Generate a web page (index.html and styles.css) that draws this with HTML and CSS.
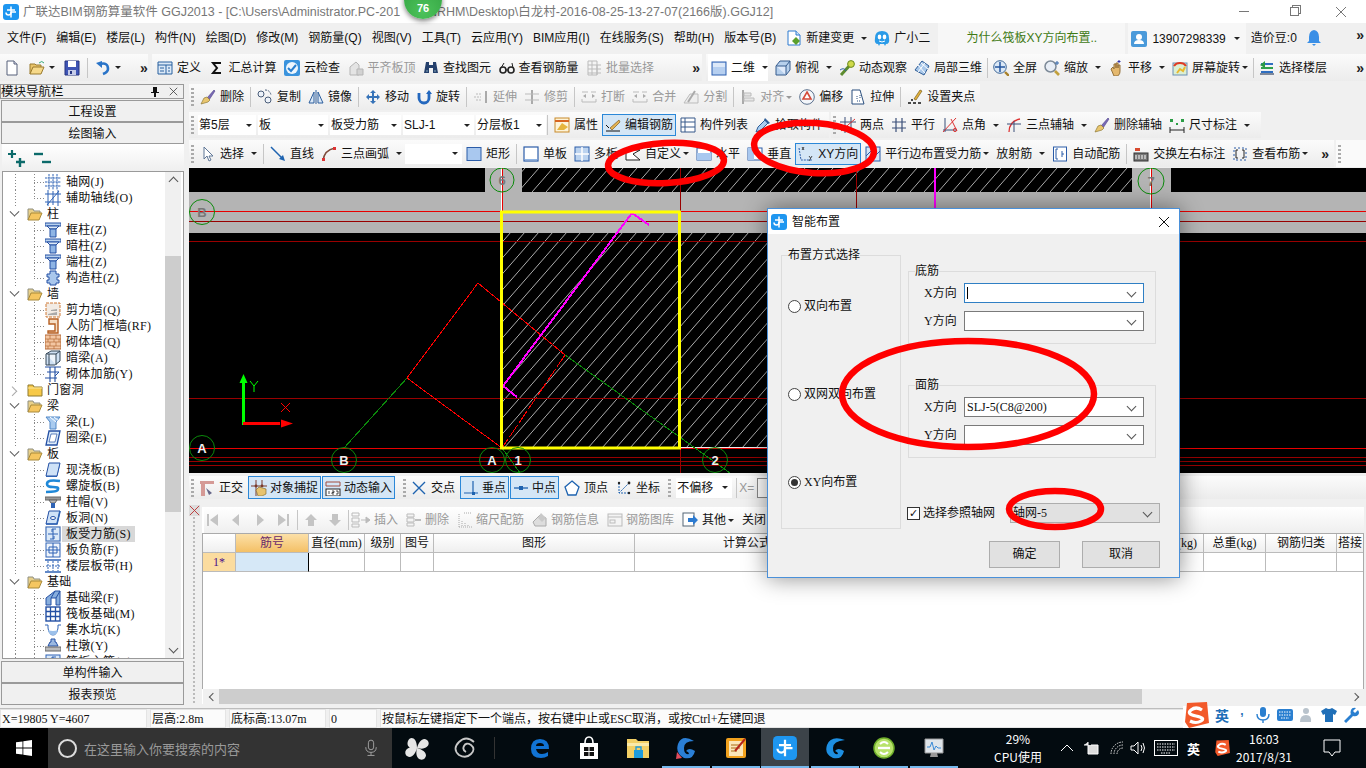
FILE: index.html
```html
<!DOCTYPE html>
<html lang="zh-CN">
<head>
<meta charset="utf-8">
<title>广联达BIM钢筋算量软件 GGJ2013</title>
<link rel="stylesheet" href="styles.css">
</head>
<body>
<svg class="sprite" xmlns="http://www.w3.org/2000/svg">
<defs>
<symbol id="new" viewBox="0 0 16 16"><path d="M3 1h7l3 3v11H3z" fill="#fff" stroke="#56607a"/><path d="M10 1v3h3" fill="#dde" stroke="#56607a"/></symbol>
<symbol id="chg" viewBox="0 0 16 16"><path d="M2 1h8l4 4v10H2z" fill="#fff" stroke="#2c7ad0"/><path d="M10 1v4h4" fill="#cfe3f7" stroke="#2c7ad0"/><path d="M10 7l4 4-4 4-4-4z" fill="#5aa02c"/></symbol>
<symbol id="gxe" viewBox="0 0 16 16"><path d="M1 8Q1 1 8 1t7 7q1 6-3 6l-1 2-1-2H6l-1 2-1-2Q0 14 1 8z" fill="#2a9be8"/><ellipse cx="5.500" cy="7" rx="1.800" ry="2.400" fill="#fff"/><ellipse cx="10.500" cy="7" rx="1.800" ry="2.400" fill="#fff"/><path d="M5 11q3 2 6 0" fill="none" stroke="#fff"/></symbol>
<symbol id="usr" viewBox="0 0 16 16"><rect width="16" height="16" rx="2" fill="#4a9ada"/><circle cx="8" cy="6" r="3" fill="#fff"/><path d="M3 13q0-4 5-4t5 4z" fill="#fff"/></symbol>
<symbol id="bell" viewBox="0 0 16 16"><path d="M8 0q5 1 5 7v4l2 2H1l2-2V7q0-6 5-7z" fill="#3a8fe6"/><path d="M6 14h4l-2 2z" fill="#3a8fe6"/></symbol>
<symbol id="x" viewBox="0 0 12 12"><path d="M1 1l10 10M11 1L1 11" stroke="currentColor" fill="none"/></symbol>
<symbol id="open" viewBox="0 0 16 16"><path d="M1 14V4h5l1 1h5v2" fill="#e9c46a" stroke="#9a7a2e"/><path d="M1 14l3-7h11l-3 7z" fill="#f6d98a" stroke="#9a7a2e"/><path d="M10 3q3-3 5 0" fill="none" stroke="#3a7"/></symbol>
<symbol id="save" viewBox="0 0 16 16"><path d="M1 1h14v14H1z" fill="#3f55b5" stroke="#263580"/><path d="M4 1h8v6H4z" fill="#fff"/><path d="M4 10h8v5H4z" fill="#c6cce8"/><path d="M6 11h2v3H6z" fill="#263580"/></symbol>
<symbol id="undo" viewBox="0 0 16 16"><path d="M5 4q8-2 8 5 0 3-5 5" fill="none" stroke="#2a74c8" stroke-width="2.600"/><path d="M1 3l6-2v7z" fill="#2a74c8"/></symbol>
<symbol id="def" viewBox="0 0 16 16"><path d="M1 2h14v12H1z" fill="#dce9f7" stroke="#28609f"/><path d="M1 5h14M9 5v9M3 8h4M3 11h4M11 8h2M11 11h2" stroke="#28609f"/></symbol>
<symbol id="sigma" viewBox="0 0 16 16"><path d="M12 3H4l4 5-4 5h8" fill="none" stroke="#111" stroke-width="2"/></symbol>
<symbol id="cloud" viewBox="0 0 16 16"><rect x="0" y="0" width="16" height="16" rx="2" fill="#3a93dd"/><circle cx="8" cy="8" r="6" fill="#eef6fd"/><path d="M4 8l3 3 5-6" fill="none" stroke="#2a7fce" stroke-width="2"/></symbol>
<symbol id="flat" viewBox="0 0 16 16"><path d="M2 15V7l6-5 3 3v10z" fill="#e4e4e4" stroke="#b5b5b5"/><path d="M9 15V9h6v6z" fill="#d2d2d2" stroke="#b5b5b5"/></symbol>
<symbol id="binoc" viewBox="0 0 16 16"><path d="M3 2h3v3h4V2h3l2 11h-5V8H6v5H1z" fill="#25406c"/><path d="M3 11h2M11 11h2" stroke="#8ab"/></symbol>
<symbol id="glass" viewBox="0 0 16 16"><circle cx="4" cy="10" r="3" fill="none" stroke="#222" stroke-width="1.600"/><circle cx="12" cy="10" r="3" fill="none" stroke="#222" stroke-width="1.600"/><path d="M7 10h2M2 8l3-5M14 8l-1-5" stroke="#222"/></symbol>
<symbol id="batch" viewBox="0 0 16 16"><path d="M2 1h9v14H2z" fill="#f4f4f4" stroke="#bbb"/><path d="M2 5h13M2 9h13M2 13h13M6 1v14M11 5v10" stroke="#bbb"/></symbol>
<symbol id="sq" viewBox="0 0 16 16"><rect x="1" y="2" width="14" height="13" fill="#b6cff0" stroke="#2c5fb0"/><path d="M2 3h12v4H2z" fill="#dce8f8"/></symbol>
<symbol id="cube" viewBox="0 0 16 16"><path d="M1 6l4-5h10v9l-4 5H1z" fill="#b7d0ec" stroke="#355a8c"/><path d="M1 6h10v9M11 6l4-5" fill="#dfeafa" stroke="#355a8c"/></symbol>
<symbol id="orbit" viewBox="0 0 16 16"><path d="M2 15L12 4" stroke="#5d8c2f" stroke-width="3"/><circle cx="12" cy="4" r="3.400" fill="#cfd94a" stroke="#6a8a20"/><path d="M1 10q4-3 6 1" fill="none" stroke="#2c5fb0"/></symbol>
<symbol id="part" viewBox="0 0 16 16"><path d="M8 1l7 5-5 9-9-5z" fill="#a9c8ea" stroke="#2e5c96"/><path d="M4 5l7 8M7 3l7 6M11 3l-7 9" stroke="#fff"/></symbol>
<symbol id="zfull" viewBox="0 0 16 16"><circle cx="7" cy="7" r="6.300" fill="#dbe8f6" stroke="#3d6696"/><path d="M7 2v10M2 7h10" stroke="#25559e" stroke-width="1.500"/><path d="M12 12l4 4" stroke="#a9812b" stroke-width="2.400"/></symbol>
<symbol id="zoom" viewBox="0 0 16 16"><circle cx="6.500" cy="6.500" r="5.500" fill="#e8eef6" stroke="#7d8a98" stroke-width="1.500"/><path d="M11 11l4 4" stroke="#c2a03c" stroke-width="2.600"/><path d="M13 1v4M11 3h4" stroke="#36a"/></symbol>
<symbol id="hand" viewBox="0 0 16 16"><path d="M3 9l2-2 1 2V4h2v4-5h2v5-3h2v6q0 5-4 5H6z" fill="#e4b86e" stroke="#94713a"/><path d="M11 0v3M9.500 1.500h3" stroke="#33a"/></symbol>
<symbol id="srot" viewBox="0 0 16 16"><rect x="1" y="3" width="14" height="12" fill="#dcefd3" stroke="#6b90b5"/><path d="M5 13l3-4 3 2 2-4" stroke="#e9b92e" stroke-width="2" fill="none"/><path d="M2 6a7 6 0 0 1 12 0" fill="none" stroke="#e03a22" stroke-width="2"/></symbol>
<symbol id="floors" viewBox="0 0 16 16"><path d="M2 3h12v2H2z" fill="#2f6ec0"/><path d="M2 7h12v2H2z" fill="#2fa04a"/><path d="M2 11h12v2H2z" fill="#2f6ec0"/><path d="M6 1L1 5l5 3z" fill="#2a9a44"/><path d="M1 14h14" stroke="#124"/></symbol>
<symbol id="brush" viewBox="0 0 16 16"><path d="M7 9L14 1l1 1-6 9z" fill="#7a6bb5" stroke="#4d3f8a" stroke-width=".6"/><path d="M7 8l3 3-2 2-7 2 3-6z" fill="#e9c66e" stroke="#8f7a36" stroke-width=".7"/></symbol>
<symbol id="copy" viewBox="0 0 16 16"><circle cx="4" cy="5" r="3" fill="#eef3fa" stroke="#4a5d78"/><circle cx="11" cy="11" r="3" fill="#eef3fa" stroke="#4a5d78"/><path d="M8 1q5 0 6 5" fill="none" stroke="#4a5d78" stroke-dasharray="2 1"/></symbol>
<symbol id="mirror" viewBox="0 0 16 16"><path d="M1 14L6 3v11zM15 14L10 3v11z" fill="#dce9f7" stroke="#2b5d9c"/><path d="M8 1v14" stroke="#2b5d9c"/></symbol>
<symbol id="move" viewBox="0 0 16 16"><path d="M8 1l3 3H9v3h3V5l3 3-3 3V9H9v3h2l-3 3-3-3h2V9H4v2L1 8l3-3v2h3V4H5z" fill="#3673b8"/></symbol>
<symbol id="rot" viewBox="0 0 16 16"><path d="M3 4v5a5 5 0 0 0 10 0V3" fill="none" stroke="#2468be" stroke-width="2.800"/><path d="M10 5l3-4 3 4z" fill="#2468be"/></symbol>
<symbol id="gext" viewBox="0 0 16 16"><path d="M1 8h7M3 5h5M3 11h5" stroke="#bbb" stroke-dasharray="2 1"/><path d="M13 2v12" stroke="#aaa" stroke-width="2"/></symbol>
<symbol id="gtrim" viewBox="0 0 16 16"><path d="M8 1v14" stroke="#aaa" stroke-width="2"/><path d="M1 5h14M1 11h14" stroke="#bbb"/></symbol>
<symbol id="gbrk" viewBox="0 0 16 16"><path d="M1 3h6M10 3h5M1 13h14v-3M1 13v-3" stroke="#bbb" fill="none"/><path d="M2 7l3-2v4zM14 7l-3-2v4z" fill="#aaa"/></symbol>
<symbol id="gsplit" viewBox="0 0 16 16"><path d="M1 14h14V5H7z" fill="#eee" stroke="#bbb"/><path d="M12 2L5 13" stroke="#aaa" stroke-width="2"/></symbol>
<symbol id="galn" viewBox="0 0 16 16"><path d="M3 1v14" stroke="#aaa" stroke-width="2"/><path d="M4 4h7v3H4zM4 9h10v3H4z" fill="#e6e6e6" stroke="#bbb"/></symbol>
<symbol id="off" viewBox="0 0 16 16"><circle cx="8" cy="8" r="7.300" fill="#f3f6fa" stroke="#5a6f8c"/><path d="M8 3l4 7H4z" fill="#fff" stroke="#d44a3a" stroke-width="1.600"/></symbol>
<symbol id="stretch" viewBox="0 0 16 16"><path d="M2 1h8l4 14H2z" fill="#fff" stroke="#2b4f7e"/><path d="M7 7v3M10 6v3M7 12h3" stroke="#2b4f7e" stroke-dasharray="1 1"/></symbol>
<symbol id="grip" viewBox="0 0 16 16"><path d="M7 10L13 1l2 1-6 9z" fill="#e3b23c" stroke="#7a5f1e" stroke-width=".7"/><path d="M1 14h3M6 14h3M11 14h3M4 11h2" stroke="#111" stroke-width="1.300"/></symbol>
<symbol id="attr" viewBox="0 0 16 16"><rect x="1" y="1" width="14" height="14" fill="#fdf3d8" stroke="#c88a2a"/><path d="M1 4h14" stroke="#d8641f" stroke-width="2"/><path d="M3 13l5-7 6 4-4 3z" fill="#e6b53e"/></symbol>
<symbol id="edit" viewBox="0 0 16 16"><path d="M5 11L14 3l1 2-8 8z" fill="#e4b352" stroke="#7e5a1c" stroke-width=".7"/><path d="M1 14h14M1 8l3 3" stroke="#111"/></symbol>
<symbol id="list" viewBox="0 0 16 16"><path d="M1 1h14v14H1z" fill="#fff" stroke="#36598a"/><path d="M5 1v14M1 5h14M1 10h14" stroke="#36598a"/></symbol>
<symbol id="pick" viewBox="0 0 16 16"><path d="M1 15l2-5 7-7 3 3-7 7z" fill="#a9cdf0" stroke="#2d5d98"/><path d="M10 1l5 5-2 1-4-4z" fill="#2d5d98"/></symbol>
<symbol id="twop" viewBox="0 0 16 16"><path d="M5 0v16M11 0v16M0 5h16" stroke="#3a4f78"/><path d="M1 14L15 2" stroke="#d33"/><circle cx="3" cy="12" r="1.500" fill="#d33"/></symbol>
<symbol id="para" viewBox="0 0 16 16"><path d="M5 1v14M11 1v14M1 5h14M1 11h14" stroke="#3a4f78" stroke-width="1.200"/></symbol>
<symbol id="pang" viewBox="0 0 16 16"><path d="M3 1v14M1 13h14" stroke="#3a4f78"/><path d="M1 15L14 1M9 2l6 12" stroke="#d33"/><circle cx="13" cy="13" r="1.600" fill="none" stroke="#d33"/></symbol>
<symbol id="arc3" viewBox="0 0 16 16"><path d="M3 15Q3 4 14 2" fill="none" stroke="#d33" stroke-width="1.300"/><path d="M1 7h14M8 4v11" stroke="#3a4f78"/></symbol>
<symbol id="dim" viewBox="0 0 16 16"><path d="M1 13h14M1 10v6M15 10v6" stroke="#222"/><rect x="1" y="2" width="3" height="3" fill="#2a9c44"/><rect x="12" y="2" width="3" height="3" fill="#2a9c44"/><rect x="7" y="6" width="2" height="2" fill="#2a9c44"/></symbol>
<symbol id="cur" viewBox="0 0 16 16"><path d="M4 1v12l3-3 2 5 2-1-2-4h4z" fill="#fff" stroke="#5f7696"/></symbol>
<symbol id="line" viewBox="0 0 16 16"><path d="M1 1l12 12" stroke="#1e63b0" stroke-width="1.500"/><path d="M15 15l-6-2 4-4z" fill="#1e63b0"/></symbol>
<symbol id="arc" viewBox="0 0 16 16"><path d="M2 15Q3 4 14 2" fill="none" stroke="#7d4b3a" stroke-width="1.500"/><rect x="1" y="12" width="3" height="3" fill="#d33"/><rect x="12" y="1" width="3" height="3" fill="#d33"/></symbol>
<symbol id="rect" viewBox="0 0 16 16"><rect x="1" y="1.500" width="14" height="13" fill="#a9c8ef" stroke="#2b5ca8"/></symbol>
<symbol id="one" viewBox="0 0 16 16"><rect x="1" y="1" width="14" height="14" fill="#fff" stroke="#2b5ca8" stroke-width="1.200"/><path d="M2 13h12v1H2z" fill="#8fb4e3"/></symbol>
<symbol id="multi" viewBox="0 0 16 16"><rect x="1" y="1" width="14" height="14" fill="#bcd3ef" stroke="#2b5ca8"/><path d="M8 1v14M1 8h14" stroke="#fff" stroke-width="1.500"/></symbol>
<symbol id="cust" viewBox="0 0 16 16"><path d="M1 14V4h14L8 8l7 6z" fill="#fff" stroke="#222"/></symbol>
<symbol id="horiz" viewBox="0 0 16 16"><rect x="1" y="2" width="14" height="12" fill="#fff" stroke="#2b5ca8"/><path d="M1 7h14v7H1z" fill="#a9c8ef"/></symbol>
<symbol id="vert" viewBox="0 0 16 16"><rect x="1" y="2" width="14" height="12" fill="#fff" stroke="#2b5ca8"/><path d="M1 2h6v12H1z" fill="#a9c8ef"/></symbol>
<symbol id="xy" viewBox="0 0 16 16"><path d="M1 2l2 12h11" fill="none" stroke="#2b5ca8" stroke-dasharray="2 1"/><path d="M4 1l2 3M6 1L4 4M11 10l1.500 2M14 10l-3 5" stroke="#222" stroke-width=".8"/></symbol>
<symbol id="pedge" viewBox="0 0 16 16"><rect x="1" y="1" width="14" height="14" fill="#d5e5f7" stroke="#2b5ca8"/><path d="M1 10L10 1M5 15L15 5" stroke="#2b5ca8"/></symbol>
<symbol id="auto" viewBox="0 0 16 16"><rect x="1.500" y="1" width="13" height="14" fill="#fff" stroke="#2b5ca8"/><path d="M6 3H4v10h2M10 5v6M10 8h2" fill="none" stroke="#2b5ca8"/></symbol>
<symbol id="swap" viewBox="0 0 16 16"><rect x="1" y="7" width="14" height="8" fill="#777" stroke="#333"/><path d="M3 9v4M6 9v4M9 9v4M12 9v4" stroke="#fff"/><path d="M2 2h5v3H2z" fill="#d84a2f"/></symbol>
<symbol id="view" viewBox="0 0 16 16"><rect x="2" y="2" width="12" height="12" fill="none" stroke="#2b5ca8" stroke-dasharray="2 2"/><path d="M6 4H4v8h2M10 4h2v8h-2" fill="none" stroke="#222"/></symbol>
<symbol id="ortho" viewBox="0 0 16 16"><path d="M1 1h14v3H6v12H2V4H1z" fill="#d59a96"/><path d="M7 8l6 5-3 2z" fill="#668"/></symbol>
<symbol id="snap" viewBox="0 0 16 16"><path d="M5 0v16M11 0v7M0 6h16" stroke="#7a3b2c"/><circle cx="5" cy="6" r="1.400" fill="#7a3b2c"/><circle cx="11" cy="6" r="1.400" fill="#7a3b2c"/><path d="M5 10l3-3 7 2v5l-4 2H7z" fill="#e7c36f" stroke="#8a7130" stroke-width=".7"/></symbol>
<symbol id="dyn" viewBox="0 0 16 16"><path d="M1 2h14M1 6h14M1 2v4M15 2v4" stroke="#a34c3e"/><rect x="1" y="9" width="14" height="7" fill="#fff" stroke="#222"/><path d="M4 11v3M7 11h2v1.500H7V14h2M11 11h2v3h-2" fill="none" stroke="#222" stroke-width=".8"/></symbol>
<symbol id="inter" viewBox="0 0 16 16"><path d="M2 2l12 12M14 2L2 14" stroke="#1e63b0" stroke-width="1.400"/></symbol>
<symbol id="perp" viewBox="0 0 16 16"><path d="M10 1v13M1 13h14" stroke="#1e63b0" stroke-width="1.200"/><rect x="9" y="12" width="3" height="3" fill="#1e63b0"/></symbol>
<symbol id="mid" viewBox="0 0 16 16"><path d="M1 8h14" stroke="#1e63b0" stroke-width="1.300"/><rect x="6" y="6" width="4" height="4" fill="#1e63b0"/></symbol>
<symbol id="apex" viewBox="0 0 16 16"><path d="M8 1l7 6-3 8H4L1 7z" fill="#fff" stroke="#1e63b0" stroke-width="1.300"/></symbol>
<symbol id="coord" viewBox="0 0 16 16"><path d="M3 13L13 3M3 3v10h10" fill="none" stroke="#1e63b0" stroke-dasharray="2 1"/><circle cx="13" cy="3" r="1.400" fill="#222"/><circle cx="3" cy="3" r="1.200" fill="#222"/><circle cx="13" cy="13" r="1.200" fill="#222"/></symbol>
<symbol id="tfirst" viewBox="0 0 16 16"><path d="M3 2h2v12H3zM14 2v12L6 8z" fill="#c4c4c4"/></symbol>
<symbol id="tprev" viewBox="0 0 16 16"><path d="M11 2v12L4 8z" fill="#c4c4c4"/></symbol>
<symbol id="tnext" viewBox="0 0 16 16"><path d="M5 2v12l7-6z" fill="#c4c4c4"/></symbol>
<symbol id="tlast" viewBox="0 0 16 16"><path d="M11 2h2v12h-2zM2 2v12l8-6z" fill="#c4c4c4"/></symbol>
<symbol id="tup" viewBox="0 0 16 16"><path d="M8 2l6 6h-3v6H5V8H2z" fill="#c4c4c4"/></symbol>
<symbol id="tdn" viewBox="0 0 16 16"><path d="M8 14l6-6h-3V2H5v6H2z" fill="#c4c4c4"/></symbol>
<symbol id="tins" viewBox="0 0 20 16"><path d="M1 1h7v3H1zM1 12h7v3H1zM1 6h7v4H1z" fill="none" stroke="#bbb"/><path d="M10 8h8M15 5l4 3-4 3z" fill="#bbb" stroke="#bbb"/></symbol>
<symbol id="tdel" viewBox="0 0 16 16"><path d="M1 2h7v3H1zM1 11h7v3H1zM1 6h7v4H1z" fill="#f4f4f4" stroke="#bbb"/><path d="M9 8h6" stroke="#aaa" stroke-width="1.500"/></symbol>
<symbol id="tscale" viewBox="0 0 16 16"><path d="M2 15V1M2 15h13M5 14V8M8 14v-4M11 14v-2M14 1H6" stroke="#aaa" stroke-dasharray="1 1"/></symbol>
<symbol id="tinfo" viewBox="0 0 16 16"><path d="M1 10l7-7 6 3v8H3z" fill="#ddd" stroke="#aaa"/><path d="M9 1l5 5-4 4-4-4z" fill="#c9c9c9"/></symbol>
<symbol id="tlib" viewBox="0 0 16 16"><rect x="1" y="2" width="14" height="12" fill="#f4f4f4" stroke="#bbb"/><path d="M1 5h14" stroke="#bbb"/><rect x="3" y="8" width="5" height="3" fill="none" stroke="#bbb"/></symbol>
<symbol id="tother" viewBox="0 0 16 16"><rect x="1" y="1" width="11" height="13" fill="#fff" stroke="#567"/><path d="M6 6h5V3l5 5-5 5v-3H6z" fill="#2c7ad0"/></symbol>
<symbol id="plus2" viewBox="0 0 20 18"><path d="M1 4h8M5 0v8" stroke="#0c6a6a" stroke-width="2.200"/><path d="M13 8v9M9 12h9" stroke="#0c6a6a" stroke-width="2.400"/></symbol>
<symbol id="minus2" viewBox="0 0 20 18"><path d="M1 4h9" stroke="#0c6a6a" stroke-width="2.400"/><path d="M9 12h9" stroke="#0c6a6a" stroke-width="2.400"/></symbol>
<symbol id="fo" viewBox="0 0 16 14"><path d="M1 13V2h5l1 2h6v3" fill="#e8d08a" stroke="#8f8f80"/><path d="M1 13l3-7h11l-3 7z" fill="#f5c660" stroke="#a88a3a"/></symbol>
<symbol id="fc" viewBox="0 0 16 14"><path d="M1 13V2h5l1 2h8v9z" fill="#f7c948" stroke="#8f7a30"/><path d="M1 5h14" stroke="#fbe79c"/></symbol>
<symbol id="tgrid" viewBox="0 0 16 16"><path d="M4 0v16M8 0v16M12 0v16M0 4h16M0 8h16M0 12h16" stroke="#2f63b5" stroke-dasharray="2 .6"/></symbol>
<symbol id="taux" viewBox="0 0 16 16"><path d="M3 0v16M13 0v16M0 4h16M0 12h16" stroke="#2f63b5"/><path d="M2 15L14 1M8 1v14" stroke="#2f63b5"/></symbol>
<symbol id="tcol" viewBox="0 0 16 16"><path d="M0 1h16v3H0z" fill="#b9d2ef" stroke="#2450a4"/><path d="M2 4h12l-3 3H5z" fill="#dce9f7" stroke="#2450a4"/><path d="M5 7h6v8H5z" fill="#8eb4e4" stroke="#2450a4"/></symbol>
<symbol id="tgear" viewBox="0 0 16 16"><path d="M5 1h6v3h3v3h-2v3h2v3h-3v2H5v-2H2v-3h2V7H2V4h3z" fill="#a9c7ec" stroke="#2450a4"/></symbol>
<symbol id="tshear" viewBox="0 0 16 16"><rect x="1" y="1" width="14" height="14" fill="#f2ebe4" stroke="#d07a36" stroke-dasharray="3 1"/><path d="M3 12l9-2v3H3zM6 8l6-1v2H6z" fill="#a9a9a9"/></symbol>
<symbol id="tdoor" viewBox="0 0 16 16"><path d="M4 1h9v14H3v-2h7V6H4z" fill="#f5ddc4" stroke="#b65f22" stroke-width="1.400"/></symbol>
<symbol id="tbrick" viewBox="0 0 16 16"><rect x="0" y="1" width="16" height="14" fill="#f3c6a2" stroke="#b56a38"/><path d="M0 5h16M0 8h16M0 12h16M5 1v4M11 1v4M3 5v3M9 5v3M14 5v3M5 8v4M11 8v4M3 12v3M9 12v3" stroke="#b56a38" stroke-width=".7"/></symbol>
<symbol id="tbeam" viewBox="0 0 16 16"><path d="M1 4l5-3h9v10l-5 4H1z" fill="#cfe0f3" stroke="#345"/><path d="M1 4h10v11M11 4l4-3" fill="#eef4fb" stroke="#345"/><path d="M4 4v11" stroke="#345"/></symbol>
<symbol id="twall" viewBox="0 0 16 16"><path d="M0 1h16M0 12h12M5 1v15M10 1v15" stroke="#2450a4" stroke-width="1.100"/><path d="M2 6h12l-4 4" fill="none" stroke="#2450a4"/></symbol>
<symbol id="tbm2" viewBox="0 0 16 16"><path d="M1 3h14l-4 5v7H5V8z" fill="#a9cbef" stroke="#5087c7"/><path d="M5 3l6 5M9 3l5 4" stroke="#fff"/></symbol>
<symbol id="tring" viewBox="0 0 16 16"><path d="M4 1h11l-3 14H1z" fill="#dcebfa" stroke="#2450a4" stroke-width="1.300"/><path d="M6 4h6l-2 8H4z" fill="#fff" stroke="#2450a4" stroke-width=".7"/></symbol>
<symbol id="tslab" viewBox="0 0 16 16"><path d="M4 1h11l-3 13H1z" fill="#cfe2f7" stroke="#2450a4"/><path d="M1 14h11l3-13v2l-3 12H1z" fill="#2f63b5"/></symbol>
<symbol id="tspi" viewBox="0 0 16 16"><path d="M15 3Q2 1 2 6q0 3 6 3t5 2q0 3-12 3" fill="none" stroke="#1f88d8" stroke-width="2.600"/></symbol>
<symbol id="tcap" viewBox="0 0 16 16"><path d="M0 3h16v3H0z" fill="#999" stroke="#666"/><path d="M4 6h8l-2 3H6z" fill="#bbb" stroke="#666"/><path d="M6 9h4v5H6z" fill="#2f63b5"/></symbol>
<symbol id="thole" viewBox="0 0 16 16"><path d="M4 1h11l-3 13H1z" fill="#cfe2f7" stroke="#2450a4"/><ellipse cx="8" cy="8" rx="2.500" ry="1.500" fill="#fff" stroke="#2450a4"/><path d="M1 14h11l3-13" fill="none" stroke="#2f63b5" stroke-width="1.600"/></symbol>
<symbol id="trebar" viewBox="0 0 16 16"><rect x="1" y="1" width="14" height="14" fill="#dbe9f8" stroke="#2f63b5"/><path d="M3 8h10M8 3v10" stroke="#2f63b5"/><path d="M11 3H7v3M5 13h4v-3" fill="none" stroke="#2f63b5"/></symbol>
<symbol id="tneg" viewBox="0 0 16 16"><rect x="1" y="1" width="14" height="14" fill="#eef4fb" stroke="#2f63b5"/><path d="M4 5h8v6H4zM8 1v14M1 8h14" fill="none" stroke="#2f63b5"/></symbol>
<symbol id="tstrip" viewBox="0 0 16 16"><path d="M0 2h16M0 14h16" stroke="#2f63b5" stroke-width="1.600"/><path d="M3 3v10M8 3v10M13 3v10M1 8h14" stroke="#2f63b5" stroke-dasharray="2 1"/></symbol>
<symbol id="tfbeam" viewBox="0 0 16 16"><path d="M1 15V8l9-7h5v14h-4V8H6v7z" fill="#88aedd" stroke="#2450a4"/><path d="M10 1L6 8M15 1l-4 7" stroke="#2450a4"/></symbol>
<symbol id="traft" viewBox="0 0 16 16"><rect x="1" y="1" width="14" height="14" fill="#fff" stroke="#2450a4" stroke-width="1.400"/><path d="M1 5.500h14M1 10.500h14M5.500 1v14M10.500 1v14" stroke="#2450a4" stroke-width="1.300"/></symbol>
<symbol id="tpit" viewBox="0 0 16 16"><path d="M0 3h3v3q1 7 5 7t5-7V3h3" fill="none" stroke="#2f63b5"/><path d="M3 8q5 2 10 0-1 5-5 5t-5-5z" fill="#9cc0ea"/></symbol>
<symbol id="tpier" viewBox="0 0 16 16"><path d="M6 1h4v3h1l2 4H3l2-4h1z" fill="#9ab8e0" stroke="#2450a4"/><path d="M0 9h16v4H0z" fill="#bbb" stroke="#666"/></symbol>
<symbol id="gld" viewBox="0 0 16 16"><rect width="16" height="16" rx="3" fill="#1e96f0"/><path d="M4 6h8M8 2.500v6a2.500 2.500 0 0 1-5 0" fill="none" stroke="#fff" stroke-width="1.500"/><path d="M8 8h5M8 8v5.500" stroke="#fff" stroke-width="1.500"/></symbol>
<symbol id="sogou" viewBox="0 0 26 26"><path d="M4 1l20-1 2 21-20 5-4-6z" fill="#f2592a"/><path d="M19 8Q13 4 8 8t5 6 5 5q-5 3-11 0" fill="none" stroke="#fff" stroke-width="3.200"/></symbol>
</defs>
</svg>

<div class="app">
  <header class="title">
    <svg class="i"><use href="#gld"/></svg>
    <span class="title-text">广联达BIM钢筋算量软件 GGJ2013 - [C:\Users\Administrator.PC-201&nbsp;&nbsp;&nbsp;&nbsp;&nbsp;&nbsp;&nbsp;&nbsp;NRHM\Desktop\白龙村-2016-08-25-13-27-07(2166版).GGJ12]</span>
    <span class="win"><i class="w-min"></i><i class="w-max"></i><svg class="w-close"><use href="#x"/></svg></span>
  </header>

  <nav class="menu">
    <span>文件(F)</span><span>编辑(E)</span><span>楼层(L)</span><span>构件(N)</span><span>绘图(D)</span><span>修改(M)</span><span>钢筋量(Q)</span><span>视图(V)</span><span>工具(T)</span><span>云应用(Y)</span><span>BIM应用(I)</span><span>在线服务(S)</span><span>帮助(H)</span><span>版本号(B)</span>
    <span class="t mt"><svg class="i"><use href="#chg"/></svg>新建变更<b class="dd"></b></span>
    <span class="t mt gx"><svg class="i"><use href="#gxe"/></svg>广小二</span>
    <span class="ask">为什么筏板XY方向布置..</span>
    <span class="t user"><svg class="i"><use href="#usr"/></svg>13907298339<b class="dd"></b></span>
    <span class="t mt bell"><span>造价豆:0</span><svg class="i"><use href="#bell"/></svg></span>
    <b class="more">»</b>
  </nav>

  <div class="row1">
    <div class="band b1">
      <svg class="i"><use href="#new"/></svg><svg class="i"><use href="#open"/></svg><b class="dd"></b><svg class="i"><use href="#save"/></svg><i class="sep"></i><svg class="i"><use href="#undo"/></svg><b class="dd"></b><b class="more">»</b>
    </div>
    <div class="band b2">
      <span class="t"><svg class="i"><use href="#def"/></svg>定义</span>
      <span class="t"><svg class="i"><use href="#sigma"/></svg>汇总计算</span>
      <span class="t"><svg class="i"><use href="#cloud"/></svg>云检查</span>
      <span class="t off"><svg class="i"><use href="#flat"/></svg>平齐板顶</span>
      <span class="t"><svg class="i"><use href="#binoc"/></svg>查找图元</span>
      <span class="t"><svg class="i"><use href="#glass"/></svg>查看钢筋量</span>
      <span class="t off"><svg class="i"><use href="#batch"/></svg>批量选择</span>
      <b class="more end">»</b>
    </div>
    <div class="band b3">
      <span class="t pick2d"><svg class="i"><use href="#sq"/></svg>二维<b class="dd"></b></span>
      <span class="t"><svg class="i"><use href="#cube"/></svg>俯视<b class="dd"></b></span>
      <span class="t"><svg class="i"><use href="#orbit"/></svg>动态观察</span>
      <span class="t"><svg class="i"><use href="#part"/></svg>局部三维</span>
      <i class="sep"></i>
      <span class="t"><svg class="i"><use href="#zfull"/></svg>全屏</span>
      <span class="t"><svg class="i"><use href="#zoom"/></svg>缩放<b class="dd"></b></span>
      <span class="t"><svg class="i"><use href="#hand"/></svg>平移<b class="dd"></b></span>
      <span class="t"><svg class="i"><use href="#srot"/></svg>屏幕旋转<b class="dd tight"></b></span>
      <i class="sep"></i>
      <span class="t"><svg class="i"><use href="#floors"/></svg>选择楼层</span>
      <b class="more end">»</b>
    </div>
  </div>

  <div class="main">
    <aside class="side">
      <div class="side-head"><span>模块导航栏</span><svg class="pin" viewBox="0 0 10 12"><path d="M3 1h4v5h2v1H6v4H4V7H1V6h2z" fill="#111"/></svg><svg class="x"><use href="#x"/></svg></div>
      <div class="side-btn">工程设置</div>
      <div class="side-btn">绘图输入</div>
      <div class="side-tools"><svg class="pm"><use href="#plus2"/></svg><svg class="pm"><use href="#minus2"/></svg></div>
      <div class="tree-wrap">
        <div class="tree">
          <div class="leaf"><svg class="i"><use href="#tgrid"/></svg>轴网(J)</div>
          <div class="leaf last"><svg class="i"><use href="#taux"/></svg>辅助轴线(O)</div>
          <div class="fold"><b class="chev"></b><svg class="f"><use href="#fo"/></svg>柱</div>
          <div class="leaf"><svg class="i"><use href="#tcol"/></svg>框柱(Z)</div>
          <div class="leaf"><svg class="i"><use href="#tcol"/></svg>暗柱(Z)</div>
          <div class="leaf"><svg class="i"><use href="#tcol"/></svg>端柱(Z)</div>
          <div class="leaf last"><svg class="i"><use href="#tgear"/></svg>构造柱(Z)</div>
          <div class="fold"><b class="chev"></b><svg class="f"><use href="#fo"/></svg>墙</div>
          <div class="leaf"><svg class="i"><use href="#tshear"/></svg>剪力墙(Q)</div>
          <div class="leaf"><svg class="i"><use href="#tdoor"/></svg>人防门框墙(RF)</div>
          <div class="leaf"><svg class="i"><use href="#tbrick"/></svg>砌体墙(Q)</div>
          <div class="leaf"><svg class="i"><use href="#tbeam"/></svg>暗梁(A)</div>
          <div class="leaf last"><svg class="i"><use href="#twall"/></svg>砌体加筋(Y)</div>
          <div class="fold"><b class="chev closed"></b><svg class="f"><use href="#fc"/></svg>门窗洞</div>
          <div class="fold"><b class="chev"></b><svg class="f"><use href="#fo"/></svg>梁</div>
          <div class="leaf"><svg class="i"><use href="#tbm2"/></svg>梁(L)</div>
          <div class="leaf last"><svg class="i"><use href="#tring"/></svg>圈梁(E)</div>
          <div class="fold"><b class="chev"></b><svg class="f"><use href="#fo"/></svg>板</div>
          <div class="leaf"><svg class="i"><use href="#tslab"/></svg>现浇板(B)</div>
          <div class="leaf"><svg class="i"><use href="#tspi"/></svg>螺旋板(B)</div>
          <div class="leaf"><svg class="i"><use href="#tcap"/></svg>柱帽(V)</div>
          <div class="leaf"><svg class="i"><use href="#thole"/></svg>板洞(N)</div>
          <div class="leaf"><svg class="i sel-i"><use href="#trebar"/></svg><span class="sel">板受力筋(S)</span></div>
          <div class="leaf"><svg class="i"><use href="#tneg"/></svg>板负筋(F)</div>
          <div class="leaf last"><svg class="i"><use href="#tstrip"/></svg>楼层板带(H)</div>
          <div class="fold"><b class="chev"></b><svg class="f"><use href="#fo"/></svg>基础</div>
          <div class="leaf"><svg class="i"><use href="#tfbeam"/></svg>基础梁(F)</div>
          <div class="leaf"><svg class="i"><use href="#traft"/></svg>筏板基础(M)</div>
          <div class="leaf"><svg class="i"><use href="#tpit"/></svg>集水坑(K)</div>
          <div class="leaf"><svg class="i"><use href="#tpier"/></svg>柱墩(Y)</div>
          <div class="leaf"><svg class="i"><use href="#trebar"/></svg>筏板主筋(R)</div>
        </div>
        <div class="vscroll"><span class="up"></span><span class="thumb"></span><span class="down"></span></div>
      </div>
      <div class="side-btn lower">单构件输入</div>
      <div class="side-btn">报表预览</div>
    </aside>

    <section class="work">
      <div class="bar">
        <div class="band r2">
          <i class="grp-grip"></i>
          <span class="t"><svg class="i"><use href="#brush"/></svg>删除</span><i class="sep"></i>
          <span class="t"><svg class="i"><use href="#copy"/></svg>复制</span>
          <span class="t"><svg class="i"><use href="#mirror"/></svg>镜像</span><i class="sep"></i>
          <span class="t"><svg class="i"><use href="#move"/></svg>移动</span>
          <span class="t"><svg class="i"><use href="#rot"/></svg>旋转</span><i class="sep"></i>
          <span class="t off"><svg class="i"><use href="#gext"/></svg>延伸</span>
          <span class="t off"><svg class="i"><use href="#gtrim"/></svg>修剪</span><i class="sep"></i>
          <span class="t off"><svg class="i"><use href="#gbrk"/></svg>打断</span>
          <span class="t off"><svg class="i"><use href="#gbrk"/></svg>合并</span>
          <span class="t off"><svg class="i"><use href="#gsplit"/></svg>分割</span><i class="sep"></i>
          <span class="t off"><svg class="i"><use href="#galn"/></svg>对齐<b class="dd tight gr"></b></span>
          <span class="t"><svg class="i"><use href="#off"/></svg>偏移</span>
          <span class="t"><svg class="i"><use href="#stretch"/></svg>拉伸</span><i class="sep"></i>
          <span class="t"><svg class="i"><use href="#grip"/></svg>设置夹点</span>
        </div>
      </div>
      <div class="bar">
        <div class="band r3a">
          <i class="grp-grip"></i>
          <span class="cb w58">第5层<b class="dd"></b></span>
          <span class="cb w70">板<b class="dd"></b></span>
          <span class="cb w71">板受力筋<b class="dd"></b></span>
          <span class="cb w71">SLJ-1<b class="dd"></b></span>
          <span class="cb w70">分层板1<b class="dd"></b></span>
          <i class="sep"></i>
          <span class="t"><svg class="i"><use href="#attr"/></svg>属性</span>
          <span class="t on"><svg class="i"><use href="#edit"/></svg>编辑钢筋</span>
          <span class="t"><svg class="i"><use href="#list"/></svg>构件列表</span>
          <span class="t"><svg class="i"><use href="#pick"/></svg>拾取构件</span>
        </div>
        <div class="band r3b">
          <i class="grp-grip"></i>
          <span class="t"><svg class="i"><use href="#twop"/></svg>两点</span>
          <span class="t"><svg class="i"><use href="#para"/></svg>平行</span>
          <span class="t"><svg class="i"><use href="#pang"/></svg>点角<b class="dd"></b></span>
          <span class="t"><svg class="i"><use href="#arc3"/></svg>三点辅轴<b class="dd"></b></span>
          <span class="t"><svg class="i"><use href="#brush"/></svg>删除辅轴</span>
          <span class="t"><svg class="i"><use href="#dim"/></svg>尺寸标注<b class="dd"></b></span>
        </div>
      </div>
      <div class="bar">
        <div class="band r4">
          <i class="grp-grip"></i>
          <span class="t"><svg class="i"><use href="#cur"/></svg>选择<b class="dd"></b></span><i class="sep"></i>
          <span class="t"><svg class="i"><use href="#line"/></svg>直线</span>
          <span class="t"><svg class="i"><use href="#arc"/></svg>三点画弧<b class="dd"></b></span>
          <span class="cb w57"><b class="dd"></b></span>
          <span class="t"><svg class="i"><use href="#rect"/></svg>矩形</span><i class="sep"></i>
          <span class="t"><svg class="i"><use href="#one"/></svg>单板</span>
          <span class="t"><svg class="i"><use href="#multi"/></svg>多板</span>
          <span class="t"><svg class="i"><use href="#cust"/></svg>自定义<b class="dd tight"></b></span>
          <span class="t"><svg class="i"><use href="#horiz"/></svg>水平</span>
          <span class="t"><svg class="i"><use href="#vert"/></svg>垂直</span>
          <span class="t on"><svg class="i"><use href="#xy"/></svg>XY方向</span>
          <span class="t"><svg class="i"><use href="#pedge"/></svg>平行边布置受力筋<b class="dd tight"></b></span>
          <span class="t">放射筋<b class="dd"></b></span>
          <span class="t"><svg class="i"><use href="#auto"/></svg>自动配筋</span><i class="sep"></i>
          <span class="t"><svg class="i"><use href="#swap"/></svg>交换左右标注</span>
          <span class="t"><svg class="i"><use href="#view"/></svg>查看布筋<b class="dd tight"></b></span>
          <b class="more">»</b>
        </div>
        <div class="corner"><i class="grp-grip"></i></div>
      </div>

      <svg class="canvas" viewBox="189 168 1177 305" xmlns="http://www.w3.org/2000/svg">
        <defs>
          <pattern id="hatch" width="14" height="16" patternUnits="userSpaceOnUse"><path d="M0 16L14 0" stroke="#d8d8d8" stroke-width=".8"/></pattern>
        </defs>
        <rect x="189" y="168" width="1177" height="305" fill="#000"/>
        <rect x="485" y="168" width="37" height="24" fill="#b4b4b4"/>
        <rect x="1132" y="168" width="39" height="24" fill="#b4b4b4"/>
        <rect x="189" y="192" width="1177" height="41" fill="#b4b4b4"/>
        <rect x="522" y="168" width="610" height="24" fill="url(#hatch)"/>
        <rect x="502" y="233" width="600" height="214" fill="url(#hatch)"/>
        <path d="M680 447.500H1100" stroke="#eee"/>
        <g class="crisp" fill="none" stroke-width="1">
          <path d="M189 211.500H1366M189 448.500H1366" stroke="#e80000"/>
          <path d="M189 221.500H1366M189 241.500H1366M189 398.500H1366M189 457.500H1366M189 461.500H1366M189 465.500H1366" stroke="#900"/>
          <path d="M680.500 168V473M856.500 168V212" stroke="#900"/>
          <path d="M501.500 168V212M1150.500 168V212" stroke="#fff"/>
          <path d="M502.500 168V212M1151.500 168V212" stroke="#e80000"/>
          <path d="M934.500 168V208" stroke="#ff00ff" stroke-width="2"/>
          <path d="M478 283L407 378L502 448M478 283L565 355" stroke="#f00"/>
          <path d="M565 355L502 448" stroke="#f00" stroke-dasharray="14 3"/>
          <path d="M407 378L344 448M565 355L730 473M502 448L520 473" stroke="#0b8a0b"/>
          <path d="M503 386L632 213L649 225M503 386L517 397" stroke="#ff00ff" stroke-width="2"/>
        </g>
        <rect x="501.500" y="212" width="178" height="236" fill="none" stroke="#ff0" stroke-width="3"/>
        <path d="M243.500 425V380" stroke="#0f0" stroke-width="3"/><path d="M243.500 374l4 9h-8z" fill="#0f0"/>
        <path d="M243 423.500H280" stroke="#f00" stroke-width="3"/><path d="M293 423.500l-12-4v8z" fill="#f00"/>
        <path d="M250 381l4 5 4-5M254 386v6" stroke="#0f0" fill="none"/>
        <path d="M281 403l9 9M290 403l-9 9" stroke="#f00"/>
        <g fill="none" stroke="#0b8a0b">
          <circle cx="502" cy="180" r="12"/><circle cx="1151" cy="181" r="13"/><circle cx="202" cy="212" r="12.500"/><circle cx="202" cy="448" r="12.500"/><circle cx="344" cy="460" r="12.500"/><circle cx="492" cy="460" r="12.500"/><circle cx="518" cy="460" r="12.500"/><circle cx="715" cy="460" r="12.500"/>
        </g>
        <g class="cad-t">
          <text x="502" y="185" fill="#777">6</text><text x="1151" y="186" fill="#777">7</text><text x="202" y="217" fill="#777">B</text>
          <text x="202" y="453" fill="#eee">A</text><text x="344" y="465" fill="#eee">B</text><text x="492" y="465" fill="#eee">A</text><text x="518" y="465" fill="#eee">1</text><text x="715" y="465" fill="#eee">2</text>
        </g>
      </svg>

      <div class="snapbar">
        <div class="band r5">
          <i class="grp-grip"></i>
          <span class="t"><svg class="i"><use href="#ortho"/></svg>正交</span>
          <span class="t nb"><svg class="i"><use href="#snap"/></svg>对象捕捉</span>
          <span class="t nb"><svg class="i"><use href="#dyn"/></svg>动态输入</span>
          <i class="grp-grip g2"></i>
          <span class="t"><svg class="i"><use href="#inter"/></svg>交点</span>
          <span class="t nb"><svg class="i"><use href="#perp"/></svg>垂点</span>
          <span class="t nb"><svg class="i"><use href="#mid"/></svg>中点</span>
          <span class="t"><svg class="i"><use href="#apex"/></svg>顶点</span>
          <span class="t after-apex"><svg class="i"><use href="#coord"/></svg>坐标</span>
          <i class="grp-grip g2"></i>
          <span class="cb w56">不偏移<b class="dd"></b></span><i class="sep"></i>
          <span class="t off">X=</span><span class="xin"></span>
        </div>
      </div>

      <div class="panel">
        <div class="splitter"><b class="red-x"><svg class="rx"><use href="#x"/></svg></b></div>
        <div class="tbl">
          <div class="tbl-bar">
            <svg class="i"><use href="#tfirst"/></svg><svg class="i"><use href="#tprev"/></svg><svg class="i"><use href="#tnext"/></svg><svg class="i"><use href="#tlast"/></svg><i class="sep"></i>
            <svg class="i"><use href="#tup"/></svg><svg class="i"><use href="#tdn"/></svg><i class="sep"></i>
            <span class="t off ins"><svg class="i20"><use href="#tins"/></svg>插入</span>
            <span class="t off"><svg class="i"><use href="#tdel"/></svg>删除</span>
            <span class="t off"><svg class="i"><use href="#tscale"/></svg>缩尺配筋</span>
            <span class="t off"><svg class="i"><use href="#tinfo"/></svg>钢筋信息</span>
            <span class="t off"><svg class="i"><use href="#tlib"/></svg>钢筋图库</span>
            <span class="t"><svg class="i"><use href="#tother"/></svg>其他<b class="dd tight"></b></span>
            <span class="t">关闭</span>
          </div>
          <div class="grid">
            <div class="th"></div><div class="th hot">筋号</div><div class="th">直径(mm)</div><div class="th">级别</div><div class="th">图号</div><div class="th">图形</div><div class="th">计算公式</div><div class="th">公式描述</div><div class="th">长度(mm)</div><div class="th">根数</div><div class="th">搭接</div><div class="th">损耗(%)</div><div class="th">单重(kg)</div><div class="th">总重(kg)</div><div class="th">钢筋归类</div><div class="th">搭接</div>
            <div class="td num">1*</div><div class="td cur"></div><div class="td"></div><div class="td"></div><div class="td"></div><div class="td"></div><div class="td"></div><div class="td"></div><div class="td"></div><div class="td"></div><div class="td"></div><div class="td"></div><div class="td"></div><div class="td"></div><div class="td"></div><div class="td"></div>
          </div>
          <div class="hscroll"><span class="hl"></span><span class="hthumb"></span><span class="hr"></span></div>
        </div>
      </div>
    </section>
  </div>

  <footer class="status">
    <span class="s1">X=19805 Y=4607</span><span class="s2">层高:2.8m</span><span class="s3">底标高:13.07m</span><span class="s4">0</span><span class="s5">按鼠标左键指定下一个端点，按右键中止或ESC取消，或按Ctrl+左键回退</span>
  </footer>

  <div class="taskbar">
    <div class="start"><svg class="win10" viewBox="0 0 16 16"><path d="M0 2.300l6.500-.9v6.200H0zM7.300 1.300L16 0v7.600H7.300zM0 8.400h6.500v6.200L0 13.700zM7.300 8.400H16V16l-8.700-1.200z" fill="#fff"/></svg></div>
    <div class="search"><i class="cortana"></i><span>在这里输入你要搜索的内容</span><svg class="mic" viewBox="0 0 16 20"><rect x="5" y="1" width="6" height="11" rx="3" fill="none" stroke="#aaa"/><path d="M2 9q0 6 6 6t6-6M8 15v3M4 18.500h8" fill="none" stroke="#aaa"/></svg></div>
    <div class="tk"><svg class="tki" viewBox="0 0 24 24"><path d="M12 12C5 14 1 10 3 5s9-4 9 7zM12 12c2-7 6-11 10-8s1 11-10 8zM12 12c7 2 11 6 8 10s-11 1-8-10zM12 12c-2 7-6 11-10 8s-1-11 10-8z" fill="#e6e6e6"/></svg></div>
    <div class="tk"><svg class="tki" viewBox="0 0 24 24"><path d="M20 6Q12-1 5 6t0 13q7 4 12-1t0-9q-5-3-7 1t2 6" fill="none" stroke="#c8c8c8" stroke-width="1.800"/></svg></div>
    <i class="tk-sep"></i>
    <div class="tk"><svg class="tki" viewBox="0 0 24 24"><path d="M3 13Q3 3 12 3q9 0 9 10H8q1 5 6 5 3 0 6-2v4q-3 2-7 2-10 0-10-9z" fill="#1173d4"/><path d="M8 10h8q0-3-4-3t-4 3z" fill="#02090d"/></svg></div>
    <div class="tk"><svg class="tki" viewBox="0 0 24 24"><path d="M3 7h18v16H3z" fill="#fff"/><path d="M8 7q0-6 4-6t4 6" fill="none" stroke="#fff" stroke-width="1.600"/><path d="M7 11h4.500v4H7zM12.500 11H17v4h-4.500zM7 16h4.500v4H7zM12.500 16H17v4h-4.500z" fill="#111"/></svg></div>
    <div class="tk"><svg class="tki" viewBox="0 0 24 24"><path d="M1 3h9l2 2h11v17H1z" fill="#f3cf65"/><path d="M1 7h22v3H1z" fill="#fbe9a8"/><path d="M8 14h9v8H8z" fill="#1e9bdd"/><path d="M10 14v-3h5v3" fill="none" stroke="#1e9bdd" stroke-width="1.400"/></svg></div>
    <div class="tk u"><svg class="tki" viewBox="0 0 24 24"><path d="M20 5Q8-2 4 8q-3 9 6 14 9 2 11-7-6-4-9 0 3 1 3 3-5 1-5-6t10-7z" fill="#2a7fd6"/><path d="M3 16l5 6-6 1z" fill="#e34c5c"/></svg></div>
    <div class="tk u"><svg class="tki" viewBox="0 0 24 24"><rect x="2" y="2" width="20" height="20" rx="2" fill="#f2a21e"/><rect x="5" y="5" width="14" height="15" fill="#fbe7ba"/><path d="M7 9h9M7 12h9M7 15h6" stroke="#a86a14"/><path d="M11 15L21 3" stroke="#b5261a" stroke-width="2"/></svg></div>
    <div class="tk u active"><svg class="tki" viewBox="0 0 16 16"><use href="#gld"/></svg></div>
    <div class="tk u"><svg class="tki" viewBox="0 0 24 24"><path d="M22 4Q8-1 4 9q-3 9 6 13 9 2 11-7-6-4-9 0 3 1 3 3-5 1-5-6t12-8z" fill="#1d8fe2"/></svg></div>
    <div class="tk u"><svg class="tki" viewBox="0 0 24 24"><circle cx="12" cy="12" r="10" fill="#b8e26b" stroke="#6fae2a" stroke-width="1.500"/><path d="M6 12h12" stroke="#fff" stroke-width="2.400"/><path d="M8 8q4-4 8 0M8 16q4 4 8 0" fill="none" stroke="#fff" stroke-width="2"/></svg></div>
    <div class="tk u"><svg class="tki" viewBox="0 0 24 24"><path d="M3 3h18v14H3z" fill="#dfe5ea" stroke="#999"/><path d="M5 11l3 0 2-5 2 8 2-4 2 2 3 0" fill="none" stroke="#3a8ad6"/><path d="M9 17h6l1 4H8z" fill="#999"/></svg></div>
    <div class="tray">
      <div class="cpu"><span>29%</span><span>CPU使用</span></div>
      <svg class="ti caret" viewBox="0 0 16 16"><path d="M2 11l6-6 6 6" fill="none" stroke="#fff"/></svg>
      <svg class="ti bat" viewBox="0 0 16 16"><path d="M1 5h4V2M8 5h7v9H5V5" fill="#ddd" stroke="#fff"/></svg>
      <svg class="ti wifi" viewBox="0 0 16 16"><path d="M2 14a12 12 0 0 1 12-12M5 14a9 9 0 0 1 9-9M8 14a6 6 0 0 1 6-6" fill="none" stroke="#ddd" stroke-dasharray="1.500 1"/></svg>
      <svg class="ti" viewBox="0 0 16 16"><path d="M1 6h3l4-4v12l-4-4H1zM11 5q2 3 0 6M13 3q3 5 0 10" fill="none" stroke="#fff"/></svg>
      <svg class="kbd" viewBox="0 0 24 16"><rect x=".5" y=".5" width="23" height="15" fill="none" stroke="#fff"/><path d="M3 4h18M3 7h18M3 10h18M7 13h10" stroke="#fff" stroke-dasharray="1.500 1"/></svg>
      <span class="ime">英</span>
      <svg class="ti sg2" viewBox="0 0 26 26"><use href="#sogou"/></svg>
      <div class="clock"><span>16:03</span><span>2017/8/31</span></div>
      <svg class="note" viewBox="0 0 18 18"><path d="M1 1h16v12h-5l-3 4-3-4H1z" fill="none" stroke="#fff"/></svg>
    </div>
  </div>

  <div class="sogou">
    <svg class="sg" viewBox="0 0 26 26"><use href="#sogou"/></svg>
    <span class="sg-t">英</span>
    <span class="sg-p">,</span>
    <svg class="si" viewBox="0 0 16 16"><rect x="5" y="0" width="6" height="10" rx="3" fill="#2a7fd0"/><path d="M2 7q0 6 6 6t6-6M8 13v3" fill="none" stroke="#2a7fd0" stroke-width="1.400"/></svg>
    <svg class="si" viewBox="0 0 16 16"><rect x="0" y="2" width="16" height="12" rx="2" fill="#2a7fd0"/><path d="M2 5h12M2 8h12M4 11h8" stroke="#fff" stroke-dasharray="1.500 1"/></svg>
    <svg class="si" viewBox="0 0 16 16"><circle cx="7" cy="4" r="3" fill="#b9c3cc"/><path d="M1 15q0-7 6-7t5 7z" fill="#b9c3cc"/></svg>
    <svg class="si" viewBox="0 0 16 16"><path d="M5 1L0 4l2 4 2-1v8h8V7l2 1 2-4-5-3q-3 2-6 0z" fill="#1f6fb8"/></svg>
    <svg class="si" viewBox="0 0 16 16"><path d="M15 3l-3 3-2-2 3-3q-4-1-5 2t0 4l-7 7 2 2 7-7q3 1 5-1t0-5z" fill="#2a7fd0"/></svg>
  </div>

  <div class="dialog">
    <div class="dlg-title"><svg class="i"><use href="#gld"/></svg><span>智能布置</span><svg class="dlg-x"><use href="#x"/></svg></div>
    <div class="dlg-body">
      <div class="grp left">
        <b class="lg">布置方式选择</b>
        <label class="rad"><i class="r"></i>双向布置</label>
        <label class="rad"><i class="r"></i>双网双向布置</label>
        <label class="rad"><i class="r on"></i>XY向布置</label>
      </div>
      <div class="right">
        <div class="grp rb">
          <b class="lg">底筋</b>
          <div class="fr"><span>X方向</span><span class="combo focus"><i class="caretbar"></i><b class="ch"></b></span></div>
          <div class="fr"><span>Y方向</span><span class="combo"><b class="ch"></b></span></div>
        </div>
        <div class="grp rb second">
          <b class="lg">面筋</b>
          <div class="fr"><span>X方向</span><span class="combo">SLJ-5(C8@200)<b class="ch"></b></span></div>
          <div class="fr"><span>Y方向</span><span class="combo"><b class="ch"></b></span></div>
        </div>
        <div class="chk-row"><i class="cbx">✓</i><span>选择参照轴网</span><span class="combo dis">轴网-5<b class="ch"></b></span></div>
        <div class="btns"><span class="btn w71b">确定</span><span class="btn w78">取消</span></div>
      </div>
    </div>
  </div>

  <div class="badge"><span>76</span></div>

  <svg class="marks" viewBox="0 0 1366 768" xmlns="http://www.w3.org/2000/svg">
    <g fill="none" stroke="#f00" stroke-width="6.500">
      <ellipse cx="666" cy="163" rx="58" ry="20" transform="rotate(-3 666 163)"/>
      <ellipse cx="814" cy="148" rx="60" ry="25" transform="rotate(4 814 148)"/>
      <ellipse cx="968" cy="394" rx="126" ry="53"/>
      <ellipse cx="1055" cy="509" rx="46" ry="18"/>
    </g>
  </svg>
</div>
</body>
</html>
```
FILE: styles.css
```css
* { box-sizing: border-box; }
html, body { margin: 0; padding: 0; }
body { width: 1366px; height: 768px; overflow: hidden; background: #f0f0f0; font: 12px/16px "Liberation Sans", "Noto Sans CJK SC", sans-serif; color: #111; }
i { font-style: normal; }
.sprite { position: absolute; width: 0; height: 0; }
.app { position: relative; width: 1366px; height: 768px; display: flex; flex-direction: column; overflow: hidden; }
.i { width: 16px; height: 16px; flex: none; display: block; }
.i20 { width: 20px; height: 16px; flex: none; display: block; }

.title { height: 23px; flex: none; background: #fff; display: flex; align-items: center; padding-left: 3px; gap: 4px; color: #777; font-size: 12.500px; white-space: nowrap; }
.title-text { flex: 1; }
.win { display: flex; align-items: center; height: 23px; justify-content: flex-end; }
.win i { display: block; flex: none; }
.w-min { width: 10px; height: 1px; background: #777; margin-right: 41px; }
.w-max { width: 9px; height: 9px; border: 1px solid #777; margin-right: 36px; box-shadow: 2px -2px 0 -1px #fff, 2px -2px 0 0 #777; }
.w-close { width: 12px; height: 12px; margin-right: 19px; color: #777; flex: none; display: block; }

.menu { height: 31px; flex: none; display: flex; align-items: flex-start; padding: 7px 0 0 7px; gap: 10px; white-space: nowrap; }
.menu .mt { height: 16px; }
.menu .gx { margin-left: -3px; }
.ask { width: 187px; margin: -7px -7px 0 -2px; height: 31px; background: #f7f7f7; color: #3f7a14; text-align: center; line-height: 31px; }
.menu .user { background: #f7f7f7; height: 31px; margin: -7px 0 0 0; padding: 0 6px 0 3px; gap: 5px; }
.menu .bell { gap: 9px; margin-left: -5px; }
.menu .more { margin-left: auto; margin-right: 2px; }
.more { font-size: 14px; line-height: 10px; font-weight: 700; color: #222; }

.t { display: inline-flex; align-items: center; gap: 4px; white-space: nowrap; flex: none; height: 22px; }
.t.off { color: #999; }
.t.on { background: #d4e6f6; outline: 1px solid #2b88d8; outline-offset: -1px; padding: 0 3px; margin: 0 -3px; }
.t.nb { background: #d4e6f6; outline: 1px solid #2b88d8; outline-offset: -1px; padding: 0 3px; height: 23px; gap: 3px; }
.t.nb + .t.nb { margin-left: -4px; }
.dd { display: inline-block; flex: none; width: 0; height: 0; border: 3px solid transparent; border-top: 3px solid #222; border-bottom: 0; margin-left: 3px; }
.dd.tight { margin-left: -2px; }
.dd.gr { border-top-color: #999; }
.sep { flex: none; width: 1px; height: 20px; background: #c6c6c6; margin: 0 -1px; }
.band { display: flex; align-items: center; gap: 7px; background: linear-gradient(#fbfbfb, #ececec); white-space: nowrap; }

.row1 { height: 27px; flex: none; display: flex; gap: 4px; margin-bottom: 3px; }
.b1 { width: 148px; padding-left: 4px; gap: 9px; }
.b1 .dd { margin-left: -5px; }
.b1 .sep { margin: 0 -2px; }
.b1 .more { margin-left: 10px; }
.b2 { width: 550px; padding-left: 5px; gap: 7.500px; }
.b2 .more.end, .b3 .more.end { margin-left: auto; margin-right: 2px; }
.b3 { flex: 1; padding-left: 2px; gap: 7px; }
.b3 .sep { margin: 0 -2px; }
.pick2d { background: #fff; padding: 0 0 0 3px; height: 27px; width: 60px; }

.main { flex: 1; min-height: 0; display: flex; }
.side { width: 187px; flex: none; display: flex; flex-direction: column; padding: 0 3px 3px 0; font-family: "Liberation Serif", "Noto Sans CJK SC", serif; }
.side-head { height: 15px; border: 1px solid #9a9a9a; display: flex; align-items: center; font-size: 12.500px; padding: 0 5px 0 0; background: #f0f0f0; margin-bottom: 1px; }
.side-head span:first-child { flex: 1; }
.pin { width: 10px; height: 12px; margin-right: 9px; display: block; flex: none; }
.x { width: 9px; height: 9px; color: #333; display: block; flex: none; }
.side-btn { height: 22px; flex: none; border: 1px solid #9a9a9a; margin-left: 1px; padding-top: 2px; display: flex; align-items: center; justify-content: center; background: #f0f0f0; }
.side-btn.lower { margin-top: 2px; }
.side-tools { height: 27px; flex: none; margin-left: 2px; background: linear-gradient(#fff, #efefef); display: flex; align-items: center; gap: 6px; padding: 2px 0 0 5px; }
.pm { width: 20px; height: 18px; display: block; }
.tree-wrap { flex: 1; min-height: 0; margin-left: 2px; border: 1px solid #9a9a9a; display: flex; background: #fff; }
.tree { flex: 1; min-width: 0; overflow: hidden; padding-top: 2px; letter-spacing: .3px; }
.leaf, .fold { height: 16px; display: flex; align-items: center; white-space: nowrap; }
.leaf { padding-left: 42px; gap: 5px;
  background:
    repeating-linear-gradient(#888 0 1px, transparent 1px 3px) 12px 0 / 1px 100% no-repeat,
    repeating-linear-gradient(#888 0 1px, transparent 1px 3px) 31px 0 / 1px 100% no-repeat,
    repeating-linear-gradient(90deg, #888 0 1px, transparent 1px 3px) 31px 8px / 11px 1px no-repeat; }
.leaf.last { background:
    repeating-linear-gradient(#888 0 1px, transparent 1px 3px) 12px 0 / 1px 100% no-repeat,
    repeating-linear-gradient(#888 0 1px, transparent 1px 3px) 31px 0 / 1px 9px no-repeat,
    repeating-linear-gradient(90deg, #888 0 1px, transparent 1px 3px) 31px 8px / 11px 1px no-repeat; }
.fold { padding-left: 8px; gap: 4px; }
.f { width: 16px; height: 14px; display: block; flex: none; margin-left: 5px; }
.chev { width: 7px; height: 7px; flex: none; border-right: 1.500px solid #555; border-bottom: 1.500px solid #555; transform: rotate(45deg) translate(-2px, -2px); }
.chev.closed { transform: rotate(-45deg) translate(-2px, -1px); border-color: #aaa; }
.sel { background: #d8d8d8; padding: 0 4px; margin-left: -4px; }
.sel-i { background: #e8e8e8; }
.vscroll { width: 16px; flex: none; background: #f0f0f0; display: flex; flex-direction: column; margin-right: 2px; }
.vscroll .up, .vscroll .down { height: 16px; flex: none; display: block; position: relative; }
.vscroll .up::after, .vscroll .down::after { content: ""; position: absolute; left: 5px; width: 6px; height: 6px; border-left: 1.500px solid #555; border-top: 1.500px solid #555; transform: rotate(45deg); top: 6px; }
.vscroll .down::after { transform: rotate(225deg); top: 3px; }
.vscroll .thumb { display: block; flex: none; height: 256px; margin-top: 68px; background: #cdcdcd; }
.vscroll .down { margin-top: auto; }

.work { flex: 1; min-width: 0; display: flex; flex-direction: column; padding-left: 2px; }
.bar { display: flex; gap: 2px; height: 26px; flex: none; margin-bottom: 2px; }
.bar:nth-child(3) { height: 27px; margin-bottom: 1px; }
.grp-grip { width: 3px; height: 18px; flex: none; background: repeating-linear-gradient(#aaa 0 2px, transparent 2px 4px); margin: 0 0 0 2px; }
.grp-grip.g2 { margin: 0 0 0 3px; }
.r2 { width: 791px; }
.r2 .grp-grip { margin-right: -1px; }
.r3a { width: 640px; }
.r3a .grp-grip { margin-right: -3px; }
.r3a .cb { margin-right: -5px; }
.r3b { width: 430px; }
.r3b .grp-grip { margin-right: -3px; }
.r4 { flex: 1; }
.r4 .grp-grip { margin-right: -1px; }
.r4 .cb { margin: 0 -3px 0 -4px; }
.r4 .more { margin-left: 6px; }
.corner { width: 30px; background: #fafafa; flex: none; display: flex; align-items: center; }
.cb { display: inline-flex; align-items: center; justify-content: space-between; height: 20px; background: #fff; flex: none; padding-left: 1px; white-space: nowrap; }
.cb .dd { margin-right: 4px; margin-left: auto; }
.w58 { width: 58px; } .w70 { width: 70px; } .w71 { width: 71px; } .w57 { width: 57px; } .w56 { width: 56px; }
.canvas { display: block; flex: none; width: 1177px; height: 305px; }
.crisp { shape-rendering: crispEdges; }
.cad-t { font: 700 13px "Liberation Sans", sans-serif; text-anchor: middle; }
.snapbar { height: 23px; flex: none; margin-top: 3px; display: flex; }
.r5 { flex: 1; gap: 5px; overflow: hidden; }
.after-apex { margin-left: 3px; }
.r5 .sep { margin: 0 -1px; }
.r5 .t.off { margin-right: -2px; margin-left: -2px; }
.xin { width: 30px; height: 20px; background: #fff; border: 1px solid #888; flex: none; }
.panel { flex: 1; min-height: 0; display: flex; margin-top: 8px; margin-bottom: 4px; }
.splitter { width: 13px; flex: none; margin-top: -2px; background: repeating-linear-gradient(#bbb 0 2px, transparent 2px 4px) 4px 0 / 2px 100% no-repeat; }
.red-x { display: block; width: 11px; height: 11px; background: #ddd; color: #b33; }
.rx { width: 11px; height: 11px; display: block; }
.tbl { flex: 1; min-width: 0; display: flex; flex-direction: column; margin-right: 2px; background: #fff; }
.tbl-bar { height: 26px; flex: none; background: linear-gradient(#fff, #efefef); margin-left: 2px; display: flex; align-items: center; gap: 8px; white-space: nowrap; overflow: hidden; }
.tbl-bar .sep { margin: 0 -3px; }
.tbl-bar .t.off { gap: 3px; }
.tbl-bar .ins { margin-left: -3px; gap: 4px; }
.grid { border-top: 1px solid #aaa; border-left: 1px solid #aaa; border-right: 1px solid #aaa; flex: 1; min-height: 0; display: grid; grid-template-columns: 33px 73px 56px 36px 33px 201px 225px 90px 60px 40px 40px 57px 57px 62px 71px 27px; grid-template-rows: 19px 19px; align-content: start; overflow: hidden; font-family: "Liberation Serif", "Noto Sans CJK SC", serif; }
.th { background: linear-gradient(#fff, #efefef); border-right: 1px solid #bbb; border-bottom: 1px solid #bbb; text-align: center; line-height: 18px; white-space: nowrap; overflow: hidden; }
.th.hot { background: linear-gradient(#fce0a8, #f4c066); color: #6a2a6a; }
.td { border-right: 1px solid #bbb; border-bottom: 1px solid #bbb; }
.td.num { background: #fbdc9f; color: #4b0f8a; text-align: center; line-height: 18px; }
.td.cur { background: #d6e8f7; border-right: 1px solid #000; }
.hscroll { height: 15px; flex: none; background: #f0f0f0; display: flex; align-items: center; margin-left: 1px; }
.hl, .hr { width: 16px; flex: none; height: 15px; position: relative; }
.hl::after, .hr::after { content: ""; position: absolute; top: 5px; width: 5px; height: 5px; border-left: 1.500px solid #555; border-top: 1.500px solid #555; }
.hl::after { left: 7px; transform: rotate(-45deg); }
.hr::after { left: 4px; transform: rotate(135deg); }
.hthumb { width: 923px; height: 15px; background: #cdcdcd; }
.hr { margin-left: auto; }

.status { height: 20px; flex: none; display: flex; gap: 3px; font-family: "Liberation Serif", "Noto Sans CJK SC", serif; font-size: 12px; white-space: nowrap; border-top: 1px solid #bdbdbd; background: #f0f0f0; }
.status span { background: #fbfbfb; border: 1px solid #e4e4e4; display: block; line-height: 18px; padding: 0 1px; overflow: hidden; }
.s1 { width: 147px; } .s2 { width: 76px; } .s3 { width: 97px; } .s4 { width: 48px; } .s5 { flex: 1; }
.taskbar { height: 40px; flex: none; background: #030b10; display: flex; align-items: stretch; color: #fff; }
.start { width: 48px; flex: none; display: flex; align-items: center; justify-content: center; background: #000; }
.win10 { width: 16px; height: 16px; display: block; }
.search { width: 344px; flex: none; background: #333; display: flex; align-items: center; padding-left: 10px; color: #999; font: 13px "Noto Sans CJK SC", sans-serif; }
.cortana { width: 19px; height: 19px; border: 2.500px solid #ddd; border-radius: 50%; margin-right: 7px; flex: none; }
.mic { width: 14px; height: 18px; margin-left: auto; margin-right: 14px; display: block; }
.tk { width: 49px; flex: none; display: flex; align-items: center; justify-content: center; }
.tk.u { box-shadow: inset 0 -2px 0 #76b9ed; margin: 0 1.600px 0 0; width: 48px; }
.tk.active { background: #3c4349; }
.tki { width: 24px; height: 24px; display: block; }
.tk-sep { width: 1px; flex: none; margin: 9px 20px 9px 4px; background: #333; }
.tray { margin-left: auto; display: flex; align-items: center; height: 40px; }
.cpu { display: flex; flex-direction: column; align-items: center; width: 60px; font: 12px/18px "Noto Sans CJK SC", sans-serif; margin-right: 11px; }
.ti { width: 16px; height: 16px; margin-right: 8px; display: block; flex: none; }
.bat { margin-right: 10px; }
.wifi { margin-right: 5px; }
.kbd { width: 24px; height: 16px; margin: 0 9px 0 0; display: block; flex: none; }
.ime { font: 700 13px "Noto Sans CJK SC", sans-serif; margin-right: 14px; }
.clock { width: 62px; display: flex; flex-direction: column; align-items: center; font: 12px/18px "Noto Sans CJK SC", sans-serif; margin-left: -5px; }
.note { width: 18px; height: 18px; margin: 0 25px 0 28px; display: block; flex: none; }

.sogou { position: absolute; right: 0; top: 701px; width: 183px; height: 27px; display: flex; align-items: center; gap: 6px; background: linear-gradient(transparent 5px, #fff 5px); }
.sg { width: 26px; height: 26px; display: block; flex: none; }
.sg-t { color: #1f6fb8; font: 700 14px "Noto Sans CJK SC", sans-serif; }
.sg-p { color: #1f6fb8; font-weight: 700; width: 14px; margin-top: -8px; text-align: center; }
.si { width: 16px; height: 16px; display: block; flex: none; }

.dialog { position: absolute; left: 767px; top: 208px; width: 413px; height: 370px; background: #f0f0f0; border: 1px solid #4a90d9; box-shadow: 0 0 22px rgba(0,0,0,.45); font-family: "Liberation Serif", "Noto Sans CJK SC", serif; }
.dlg-title { height: 25px; background: #fff; display: flex; align-items: center; padding-left: 3px; gap: 5px; }
.dlg-title span { flex: 1; }
.dlg-x { width: 12px; height: 12px; margin-right: 9px; display: block; flex: none; color: #111; }
.dlg-body { display: flex; padding: 21px 0 0 13px; gap: 7px; }
.grp { border: 1px solid #dcdcdc; position: relative; }
.lg { position: absolute; top: -9px; left: 6px; font-weight: 400; background: #f0f0f0; line-height: 16px; white-space: nowrap; }
.left { width: 120px; height: 274px; display: flex; flex-direction: column; gap: 72px; padding: 42px 0 0 6px; flex: none; }
.rad { display: flex; align-items: center; gap: 3px; height: 16px; white-space: nowrap; }
.r { width: 13px; height: 13px; border: 1px solid #444; border-radius: 50%; background: #fff; flex: none; position: relative; }
.r.on::after { content: ""; position: absolute; left: 2px; top: 2px; width: 7px; height: 7px; background: #333; border-radius: 50%; }
.right { width: 252px; flex: none; padding-top: 16px; }
.rb { width: 248px; height: 73px; padding: 11px 0 0 15px; display: flex; flex-direction: column; gap: 8px; }
.rb.second { margin-top: 41px; }
.fr { display: flex; align-items: center; gap: 10px; height: 20px; }
.fr > span:first-child { width: 30px; flex: none; white-space: nowrap; }
.combo { display: flex; align-items: center; width: 180px; height: 20px; background: #fff; border: 1px solid #7a7a7a; padding-left: 2px; position: relative; flex: none; white-space: nowrap; }
.combo.focus { border-color: #2f7fc4; }
.caretbar { width: 1px; height: 12px; background: #000; }
.ch { position: absolute; right: 8px; top: 5px; width: 7px; height: 7px; border-right: 1px solid #555; border-bottom: 1px solid #555; transform: rotate(45deg); }
.chk-row { display: flex; align-items: center; gap: 3px; margin: 45px 0 0 -1px; height: 20px; white-space: nowrap; }
.cbx { width: 13px; height: 13px; border: 1px solid #333; background: #fff; font: 11px/11px "DejaVu Sans", sans-serif; text-align: center; flex: none; }
.combo.dis { width: 150px; background: #e1e1e1; border-color: #adadad; margin-left: 12px; }
.btns { display: flex; justify-content: flex-end; gap: 22px; margin-top: 18px; }
.btn { height: 27px; background: #e1e1e1; border: 1px solid #adadad; text-align: center; line-height: 25px; }
.w71b { width: 71px; } .w78 { width: 78px; }

.badge { position: absolute; left: 404px; top: -19px; width: 38px; height: 38px; border-radius: 50%; background: radial-gradient(circle at 50% 80%, #4cc25a, #2f9e3e); box-shadow: 0 2px 5px rgba(0,0,0,.5); color: #fff; font: 700 11px/16px "Liberation Sans", sans-serif; text-align: center; padding-top: 19px; }
.marks { position: absolute; left: 0; top: 0; width: 1366px; height: 768px; pointer-events: none; }
```
